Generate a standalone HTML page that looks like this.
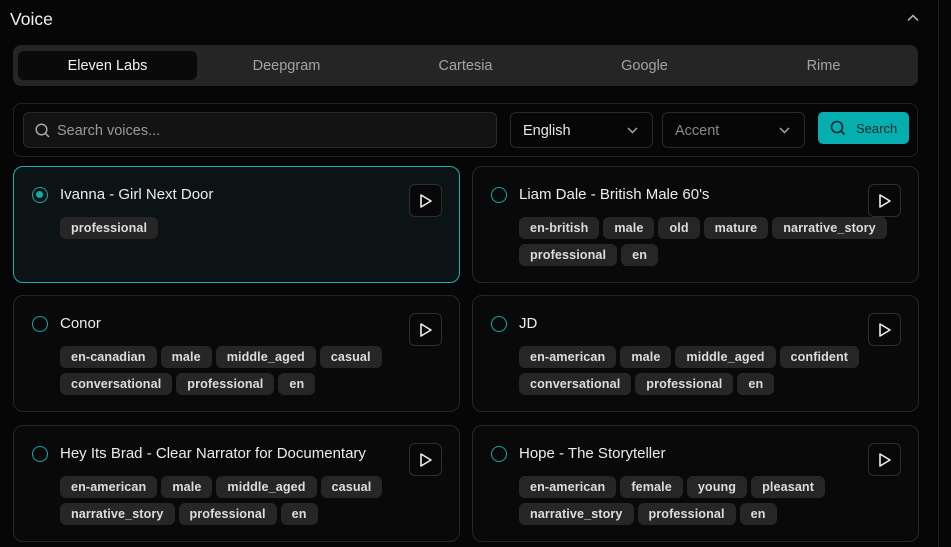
<!DOCTYPE html>
<html><head><style>
*{box-sizing:border-box;margin:0;padding:0}
body{width:951px;height:547px;background:#060606;font-family:"Liberation Sans",sans-serif;color:#e8e8e8;position:relative;overflow:hidden}
.vline{position:absolute;left:938px;top:0;width:1px;height:547px;background:#222}
.title{position:absolute;left:10px;top:9px;font-size:17.5px;color:#f2f2f2}
.chev{position:absolute;left:907px;top:14px}
.tabs{position:absolute;left:13px;top:45px;width:905px;height:41px;background:#252525;border-radius:8px}
.tab{position:absolute;top:6px;width:179px;height:29px;line-height:30px;text-align:center;font-size:14.5px;color:#a3a3a3}
.tab.act{background:#0a0a0a;color:#f2f2f2;border-radius:6px}
.panel{position:absolute;left:13px;top:103px;width:905px;height:54px;border:1px solid #222;border-radius:8px}
.inp{position:absolute;top:112px;height:36px;border:1px solid #2a2a2a;border-radius:6px;font-size:14.5px;line-height:36px}
.btn{position:absolute;left:818px;top:112px;width:91px;height:32px;background:#06aeb0;border-radius:5px;color:#0a2a2a;font-size:13px;line-height:33px;padding-left:38px}
.card{position:absolute;width:447px;height:117px;border:1px solid #262626;border-radius:10px;background:#090909}
.card.sel{border-color:#14b3b5;background:#0b1314}
.radio{position:absolute;left:18px;top:20px;width:16px;height:16px;border:1.5px solid #12a9ab;border-radius:50%}
.radio.on::after{content:"";position:absolute;left:3px;top:3px;width:7px;height:7px;background:#12a9ab;border-radius:50%}
.name{position:absolute;left:46px;top:19px;font-size:15px;color:#ececec}
.play{position:absolute;left:395px;top:17px;width:33px;height:33px;border:1px solid #2e2e2e;border-radius:6px;background:#080808}
.play svg{position:absolute;left:9px;top:8px}
.tags{position:absolute;left:46px;top:50px;width:385px;display:flex;flex-wrap:wrap;gap:5px 4px}
.tag{background:#262626;border-radius:6px;height:22px;line-height:22px;padding:0 11px;font-size:12.6px;font-weight:bold;color:#dcdcdc;letter-spacing:0.1px}
</style></head><body>
<div class="vline"></div>
<div class="title">Voice</div>
<svg class="chev" width="12" height="8" viewBox="0 0 12 8"><path d="M1 6.5 6 1.5 11 6.5" stroke="#bbb" stroke-width="1.5" fill="none"/></svg>
<div class="tabs">
<div class="tab act" style="left:5px">Eleven Labs</div>
<div class="tab" style="left:184px">Deepgram</div>
<div class="tab" style="left:363px">Cartesia</div>
<div class="tab" style="left:542px">Google</div>
<div class="tab" style="left:721px">Rime</div>
</div>
<div class="panel"></div>
<div class="inp" style="left:23px;width:474px;background:#131313;color:#9a9a9a;padding-left:33px">Search voices...
<svg style="position:absolute;left:11px;top:10px" width="15" height="15" viewBox="0 0 15 15"><circle cx="6.5" cy="6.5" r="5.3" stroke="#aaa" stroke-width="1.5" fill="none"/><path d="M10.5 10.5 14 14" stroke="#aaa" stroke-width="1.5"/></svg></div>
<div class="inp" style="left:510px;width:143px;color:#e8e8e8;padding-left:12px">English
<svg style="position:absolute;right:14px;top:14px" width="11" height="7" viewBox="0 0 11 7"><path d="M1 1 5.5 5.5 10 1" stroke="#aaa" stroke-width="1.4" fill="none"/></svg></div>
<div class="inp" style="left:662px;width:143px;color:#8a8a8a;padding-left:12px">Accent
<svg style="position:absolute;right:14px;top:14px" width="11" height="7" viewBox="0 0 11 7"><path d="M1 1 5.5 5.5 10 1" stroke="#aaa" stroke-width="1.4" fill="none"/></svg></div>
<div class="btn"><svg style="position:absolute;left:12px;top:8px" width="16" height="16" viewBox="0 0 16 16"><circle cx="7" cy="7" r="5.5" stroke="#0a2a2a" stroke-width="1.6" fill="none"/><path d="M11 11 14.5 14.5" stroke="#0a2a2a" stroke-width="1.6"/></svg>Search</div>

<div class="card sel" style="left:13px;top:166px"><div class="radio on"></div><div class="name">Ivanna - Girl Next Door</div><div class="play"><svg width="14" height="16" viewBox="0 0 14 16"><path d="M2 2 12 8 2 14Z" stroke="#eee" stroke-width="1.6" fill="none" stroke-linejoin="round"/></svg></div>
<div class="tags"><span class="tag">professional</span></div></div>

<div class="card" style="left:472px;top:166px"><div class="radio"></div><div class="name">Liam Dale - British Male 60's</div><div class="play"><svg width="14" height="16" viewBox="0 0 14 16"><path d="M2 2 12 8 2 14Z" stroke="#eee" stroke-width="1.6" fill="none" stroke-linejoin="round"/></svg></div>
<div class="tags"><span class="tag">en-british</span><span class="tag">male</span><span class="tag">old</span><span class="tag">mature</span><span class="tag">narrative_story</span><span class="tag">professional</span><span class="tag">en</span></div></div>

<div class="card" style="left:13px;top:295px"><div class="radio"></div><div class="name">Conor</div><div class="play"><svg width="14" height="16" viewBox="0 0 14 16"><path d="M2 2 12 8 2 14Z" stroke="#eee" stroke-width="1.6" fill="none" stroke-linejoin="round"/></svg></div>
<div class="tags"><span class="tag">en-canadian</span><span class="tag">male</span><span class="tag">middle_aged</span><span class="tag">casual</span><span class="tag">conversational</span><span class="tag">professional</span><span class="tag">en</span></div></div>

<div class="card" style="left:472px;top:295px"><div class="radio"></div><div class="name">JD</div><div class="play"><svg width="14" height="16" viewBox="0 0 14 16"><path d="M2 2 12 8 2 14Z" stroke="#eee" stroke-width="1.6" fill="none" stroke-linejoin="round"/></svg></div>
<div class="tags"><span class="tag">en-american</span><span class="tag">male</span><span class="tag">middle_aged</span><span class="tag">confident</span><span class="tag">conversational</span><span class="tag">professional</span><span class="tag">en</span></div></div>

<div class="card" style="left:13px;top:425px"><div class="radio"></div><div class="name">Hey Its Brad - Clear Narrator for Documentary</div><div class="play"><svg width="14" height="16" viewBox="0 0 14 16"><path d="M2 2 12 8 2 14Z" stroke="#eee" stroke-width="1.6" fill="none" stroke-linejoin="round"/></svg></div>
<div class="tags"><span class="tag">en-american</span><span class="tag">male</span><span class="tag">middle_aged</span><span class="tag">casual</span><span class="tag">narrative_story</span><span class="tag">professional</span><span class="tag">en</span></div></div>

<div class="card" style="left:472px;top:425px"><div class="radio"></div><div class="name">Hope - The Storyteller</div><div class="play"><svg width="14" height="16" viewBox="0 0 14 16"><path d="M2 2 12 8 2 14Z" stroke="#eee" stroke-width="1.6" fill="none" stroke-linejoin="round"/></svg></div>
<div class="tags"><span class="tag">en-american</span><span class="tag">female</span><span class="tag">young</span><span class="tag">pleasant</span><span class="tag">narrative_story</span><span class="tag">professional</span><span class="tag">en</span></div></div>
</body></html>
